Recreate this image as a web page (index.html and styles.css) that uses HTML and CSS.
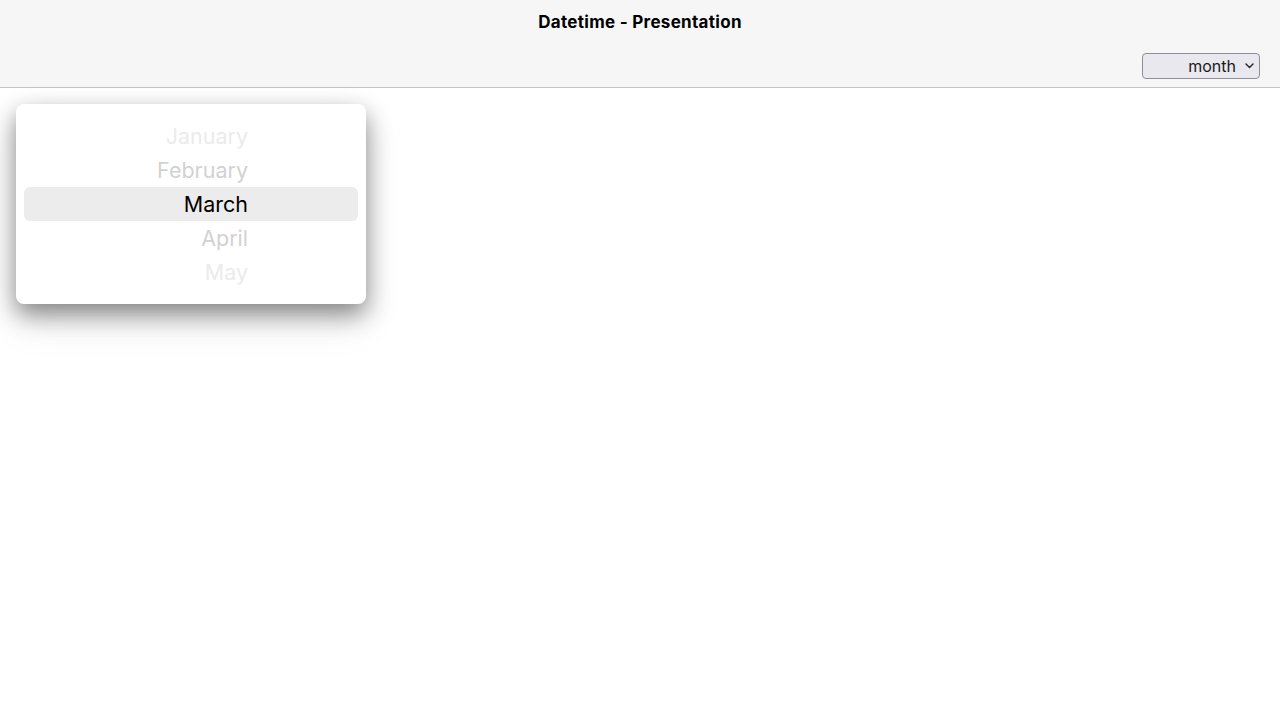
FILE: index.html
```html
<!DOCTYPE html>
<html>
<head>
<meta charset="utf-8">
<title>Datetime - Presentation</title>
<link rel="stylesheet" href="styles.css">
</head>
<body>
<header class="toolbar">
  <div class="title">Datetime - Presentation</div>
  <div class="controls">
    <div class="select">
      <span class="select-label">month</span>
      <svg class="chev" width="9" height="6" viewBox="0 0 9 6"><path d="M1 1 L4.5 4.5 L8 1" fill="none" stroke="#222" stroke-width="1.4" stroke-linecap="round" stroke-linejoin="round"/></svg>
    </div>
  </div>
</header>
<main class="content">
  <div class="picker">
    <div class="col">
      <div class="item f1">January</div>
      <div class="item f2">February</div>
      <div class="item active">March</div>
      <div class="item f2">April</div>
      <div class="item f1">May</div>
    </div>
  </div>
</main>
</body>
</html>
```
FILE: styles.css
```css
* { box-sizing: border-box; }
html, body { margin: 0; padding: 0; background: #fff; }
body { font-family: Inter, "Open Sans", "Liberation Sans", sans-serif; color: #000; min-height: 100vh; }
.toolbar {
  height: 88px;
  background: #f6f6f6;
  border-bottom: 1px solid #c4c4c4;
  display: flex;
  flex-direction: column;
}
.title {
  text-align: center;
  font-weight: 700;
  font-size: 17px;
  padding-top: 12px;
  height: 53px;
  letter-spacing: 0.3px;
}
.controls {
  display: flex;
  justify-content: flex-end;
  padding-right: 20px;
}
.select {
  width: 118px;
  height: 26px;
  border: 1px solid #8e8e98;
  border-radius: 4px;
  background: #e8e8ee;
  display: flex;
  align-items: center;
  justify-content: flex-end;
  padding-right: 5px;
  gap: 9px;
  font-size: 16px;
  color: #1a1a1a;
}
.select-label { line-height: 1; }
.chev { display: block; }
.content { padding: 16px; min-height: calc(100vh - 88px); }
.picker {
  width: 350px;
  height: 200px;
  background: #fff;
  border-radius: 8px;
  box-shadow: 0 10px 24px rgba(0,0,0,0.45), 0 20px 40px rgba(0,0,0,0.08);
  padding: 15px 8px 0;
}
.col {
  display: flex;
  flex-direction: column;
}
.item {
  height: 34px;
  line-height: 33px;
  padding-top: 1px;
  font-size: 21.5px;
  text-align: right;
  padding-right: 110px;
  border-radius: 6px;
}
.item.f1 { color: #ebebeb; }
.item.f2 { color: #d2d2d2; }
.item.active { background: #ececec; color: #000; }
```
